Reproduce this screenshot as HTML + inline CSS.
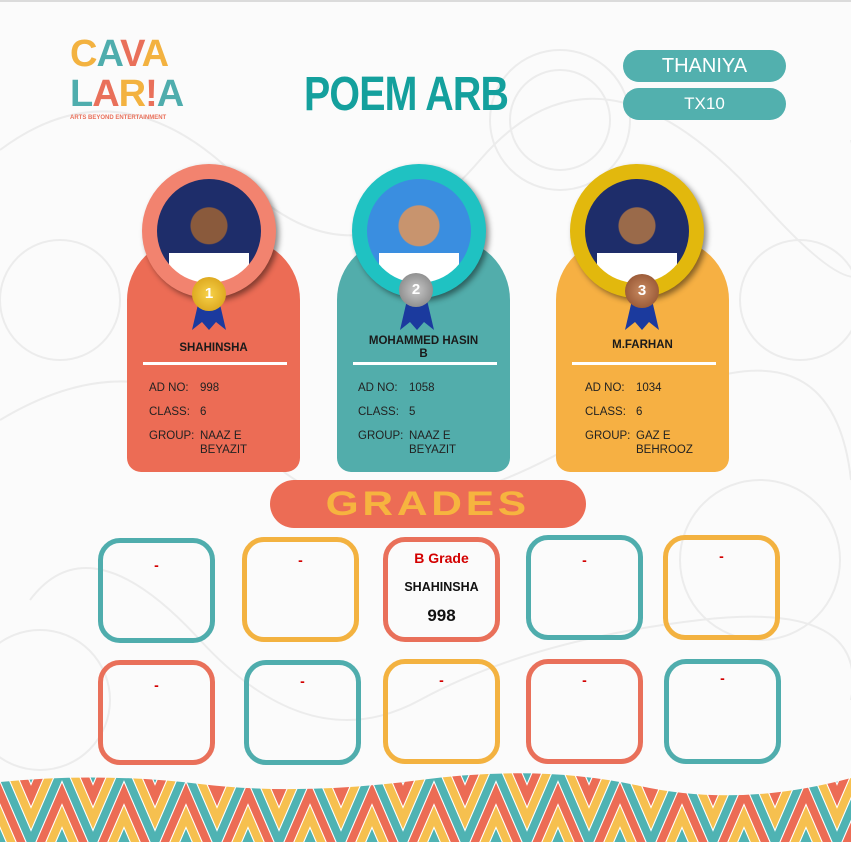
<!DOCTYPE html>
<html><head><meta charset="utf-8"><style>
*{margin:0;padding:0;box-sizing:border-box}
body{width:851px;height:842px;position:relative;overflow:hidden;background:#fbfbfb;font-family:"Liberation Sans",sans-serif}
.abs{position:absolute}
.pill{position:absolute;left:623px;width:163px;height:32px;border-radius:16px;background:#52b0ae;color:#fff;font-size:20px;text-align:center;line-height:32px}
.card{position:absolute;top:238px;width:173px;height:234px;border-radius:62px 62px 14px 14px}
.ring{position:absolute;top:164px;width:134px;height:134px;border-radius:50%;box-shadow:3px 3px 6px rgba(0,0,0,.45)}
.photo{position:absolute;left:15px;top:15px;width:104px;height:104px;border-radius:50%;overflow:hidden}
.name{position:absolute;width:173px;text-align:center;font-weight:bold;font-size:11.5px;color:#1a1a1a;line-height:13px}
.line{position:absolute;left:16px;width:144px;height:3px;background:#fff}
.row{position:absolute;left:22px;font-size:11.5px;color:#222;line-height:14px}
.row span{position:absolute;left:51px;width:80px}
.medal{position:absolute;width:34px;height:34px;border-radius:50%;font-weight:bold;font-size:15px;text-align:center;line-height:34px;color:#fff}
.box{position:absolute;width:117px;height:105px;border:5px solid;border-radius:22px;text-align:center;color:#d30000;font-weight:bold;font-size:14px}
.t{border-color:#4fadad}.y{border-color:#f3b240}.o{border-color:#e9705a}
</style></head><body>
<svg class="abs" style="left:0;top:0" width="851" height="842">
<g fill="none" stroke="#ececec" stroke-width="2">
<path d="M0 150 Q120 60 240 180 T480 160 T760 200 T851 140"/>
<path d="M0 420 Q150 330 260 450 T600 430 T851 480"/>
<path d="M30 600 Q90 520 200 640 T420 700 T700 620 T851 700"/>
<circle cx="560" cy="120" r="70"/><circle cx="560" cy="120" r="50"/><circle cx="800" cy="300" r="60"/>
<circle cx="60" cy="300" r="60"/><circle cx="760" cy="560" r="80"/><circle cx="40" cy="700" r="70"/>
</g>
<line x1="0" y1="1" x2="851" y2="1" stroke="#bbb"/>
</svg>
<div class="abs" style="left:70px;top:34px;font-family:'Liberation Sans';font-weight:bold;font-size:38px;line-height:40px;letter-spacing:-1px">
<div><span style="color:#f3b240">C</span><span style="color:#4fadad">A</span><span style="color:#e9705a">V</span><span style="color:#f3b240">A</span></div>
<div><span style="color:#4fadad">L</span><span style="color:#e9705a">A</span><span style="color:#f3b240">R</span><span style="color:#e9705a">!</span><span style="color:#4fadad">A</span></div>
<div style="font-size:6px;color:#e9705a;line-height:8px;letter-spacing:0">ARTS BEYOND ENTERTAINMENT</div>
</div>
<div class="abs" style="left:304px;top:70px;font-size:48px;font-weight:bold;color:#14a09d;transform:scaleX(.82);transform-origin:left;line-height:50px;letter-spacing:-1px">POEM ARB</div>
<div class="pill" style="top:50px">THANIYA</div>
<div class="pill" style="top:88px;font-size:17px">TX10</div>

<div class="card" style="left:127px;background:#ec6c55"></div>
<div class="card" style="left:337px;background:#52adab"></div>
<div class="card" style="left:556px;background:#f6b043"></div>

<div class="ring" style="left:142px;background:#f2836f"><div class="photo" style="background:radial-gradient(circle at 50% 45%,#8a5a3c 0 18px,transparent 19px),linear-gradient(#fff 0 0) 50% 100%/80px 30px no-repeat,#1e2d6a"></div></div>
<div class="ring" style="left:352px;background:#1fc2c2"><div class="photo" style="background:radial-gradient(circle at 50% 45%,#c8946e 0 20px,transparent 21px),linear-gradient(#fff 0 0) 50% 100%/80px 30px no-repeat,#3a8ee0"></div></div>
<div class="ring" style="left:570px;background:#e2b80d"><div class="photo" style="background:radial-gradient(circle at 50% 45%,#9a6a4a 0 18px,transparent 19px),linear-gradient(#fff 0 0) 50% 100%/80px 30px no-repeat,#1e2d6a"></div></div>

<svg class="abs" style="left:0;top:0" width="851" height="842">
<g fill="#1b3a9e"><path d="M199 300 L192 330 L202 322 L209 330 L216 322 L226 330 L219 300Z"/><path d="M407 300 L400 330 L410 322 L417 330 L424 322 L434 330 L427 300Z"/><path d="M632 300 L625 330 L635 322 L642 330 L649 322 L659 330 L652 300Z"/></g>
</svg>
<div class="medal" style="left:192px;top:277px;background:radial-gradient(#f7d24a,#d49a10)">1</div>
<div class="medal" style="left:399px;top:273px;background:radial-gradient(#c8c8c8,#7a7a7a)">2</div>
<div class="medal" style="left:625px;top:274px;background:radial-gradient(#c98a60,#8a4a2a)">3</div>

<div class="name" style="left:127px;top:342px">SHAHINSHA</div>
<div class="line" style="left:143px;top:362px"></div>
<div class="row" style="left:149px;top:381px">AD NO:<span>998</span></div>
<div class="row" style="left:149px;top:405px">CLASS:<span>6</span></div>
<div class="row" style="left:149px;top:429px">GROUP:<span>NAAZ E<br>BEYAZIT</span></div>

<div class="name" style="left:337px;top:335px">MOHAMMED HASIN<br>B</div>
<div class="line" style="left:353px;top:362px"></div>
<div class="row" style="left:358px;top:381px">AD NO:<span>1058</span></div>
<div class="row" style="left:358px;top:405px">CLASS:<span>5</span></div>
<div class="row" style="left:358px;top:429px">GROUP:<span>NAAZ E<br>BEYAZIT</span></div>

<div class="name" style="left:556px;top:339px">M.FARHAN</div>
<div class="line" style="left:572px;top:362px"></div>
<div class="row" style="left:585px;top:381px">AD NO:<span>1034</span></div>
<div class="row" style="left:585px;top:405px">CLASS:<span>6</span></div>
<div class="row" style="left:585px;top:429px">GROUP:<span>GAZ E<br>BEHROOZ</span></div>

<div class="abs" style="left:270px;top:480px;width:316px;height:48px;border-radius:24px;background:#ec6c55;color:#f6b43f;font-weight:bold;font-size:34px;text-align:center;line-height:48px;letter-spacing:3px"><span style="display:inline-block;transform:scaleX(1.25)">GRADES</span></div>

<div class="box t" style="left:98px;top:538px;padding-top:14px">-</div>
<div class="box y" style="left:242px;top:537px;padding-top:10px">-</div>
<div class="box o" style="left:383px;top:537px;padding-top:8px;font-size:14px">B Grade<div style="color:#111;font-size:12.5px;margin-top:14px">SHAHINSHA</div><div style="color:#111;font-size:17px;margin-top:12px">998</div></div>
<div class="box t" style="left:526px;top:535px;padding-top:12px">-</div>
<div class="box y" style="left:663px;top:535px;padding-top:8px">-</div>
<div class="box o" style="left:98px;top:660px;padding-top:12px">-</div>
<div class="box t" style="left:244px;top:660px;padding-top:8px">-</div>
<div class="box y" style="left:383px;top:659px;padding-top:8px">-</div>
<div class="box o" style="left:526px;top:659px;padding-top:8px">-</div>
<div class="box t" style="left:664px;top:659px;padding-top:6px">-</div>

<svg class="abs" style="left:0;top:770px" width="851" height="72">
<defs>
<clipPath id="c"><path d="M0 12 Q100 2 200 14 T420 10 T640 16 T851 8 V72 H0Z"/></clipPath>
<polyline id="zz" fill="none" stroke-width="8" points="-62,0 -31,72 0,0 31,72 62,0 93,72 124,0 155,72 186,0 217,72 248,0 279,72 310,0 341,72 372,0 403,72 434,0 465,72 496,0 527,72 558,0 589,72 620,0 651,72 682,0 713,72 744,0 775,72 806,0 837,72 868,0 899,72 930,0"/>
</defs>
<g clip-path="url(#c)">
<rect width="851" height="72" fill="#fff"/>
<use href="#zz" stroke="#f6c04f" y="-92"/>
<use href="#zz" stroke="#4fb3b3" y="-69"/>
<use href="#zz" stroke="#ec6c55" y="-46"/>
<use href="#zz" stroke="#f6c04f" y="-23"/>
<use href="#zz" stroke="#4fb3b3" y="0"/>
<use href="#zz" stroke="#ec6c55" y="23"/>
<use href="#zz" stroke="#f6c04f" y="46"/>
<use href="#zz" stroke="#4fb3b3" y="69"/>
</g>
</svg>
</body></html>
